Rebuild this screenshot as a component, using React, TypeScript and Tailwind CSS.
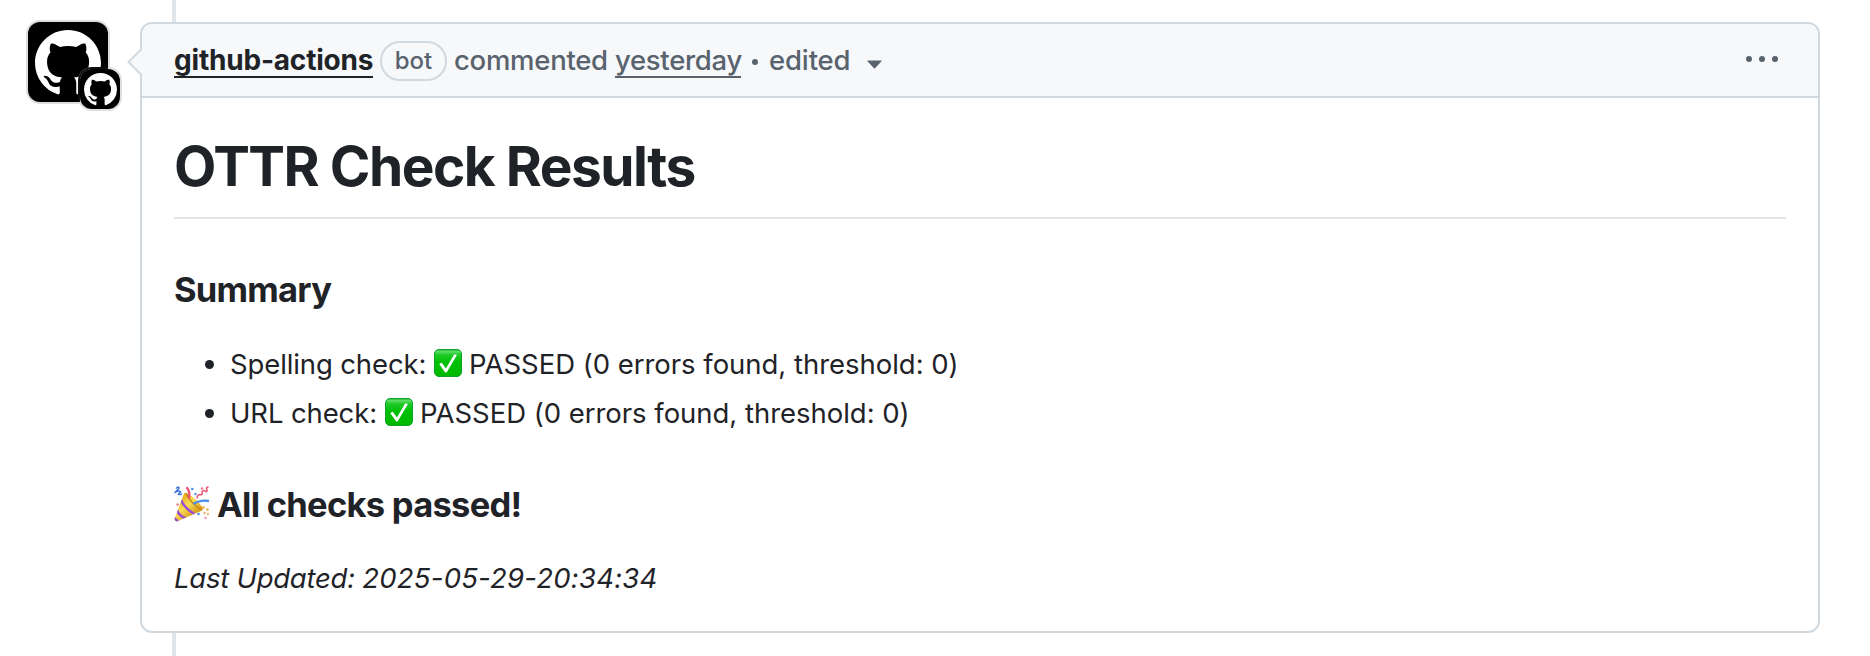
const MARK =
  'M8 0c4.42 0 8 3.58 8 8a8.013 8.013 0 0 1-5.45 7.59c-.4.08-.55-.17-.55-.38 0-.27.01-1.13.01-2.2 0-.75-.25-1.23-.54-1.48 1.78-.2 3.65-.88 3.65-3.95 0-.88-.31-1.59-.82-2.15.08-.2.36-1.02-.08-2.12 0 0-.67-.22-2.2.82-.64-.18-1.32-.27-2-.27-.68 0-1.36.09-2 .27-1.53-1.03-2.2-.82-2.2-.82-.44 1.1-.16 1.92-.08 2.12-.51.56-.82 1.28-.82 2.15 0 3.06 1.86 3.75 3.64 3.95-.23.2-.44.55-.51 1.07-.46.21-1.61.55-2.33-.66-.15-.24-.6-.83-1.23-.82-.67.01-.27.38.01.53.34.19.73.9.82 1.13.16.45.68 1.31 2.69.94 0 .67.01 1.3.01 1.49 0 .21-.15.45-.55.38A7.995 7.995 0 0 1 0 8c0-4.42 3.58-8 8-8Z';

function Mark({ className }: { className: string }) {
  return (
    <svg viewBox="0 0 16 16" className={className} fill="#fff" aria-hidden="true">
      <path d={MARK} />
    </svg>
  );
}

function Avatar() {
  return (
    <div className="relative mt-[22px] size-20 shrink-0 rounded-xl bg-black pt-2 pl-[7px] ring-2 ring-[#dedede]">
      <Mark className="size-[66px]" />
      <div className="absolute top-[47px] left-[52px] flex size-10 items-center justify-center rounded-xl bg-black shadow-[0_0_0_2px_#dedede]">
        <Mark className="size-[33px]" />
      </div>
      <div className="absolute top-[45px] left-[50px] h-[35px] w-[30px] rounded-tl-[14px] border-t-2 border-l-2 border-[#0c0c0c]" />
    </div>
  );
}

function CheckEmoji() {
  return (
    <svg viewBox="0 0 28 28" className="mt-[6px] size-7 shrink-0" aria-hidden="true">
      <defs>
        <linearGradient id="green" x1="0" y1="0" x2="0" y2="1">
          <stop offset="0" stopColor="#12b32a" />
          <stop offset="0.07" stopColor="#5fdc68" />
          <stop offset="0.2" stopColor="#1fcb27" />
          <stop offset="0.45" stopColor="#00c008" />
          <stop offset="1" stopColor="#00b900" />
        </linearGradient>
      </defs>
      <rect x="0.5" y="0.5" width="27" height="27" rx="4.5" fill="url(#green)" stroke="#10a42b" strokeWidth="1" />
      <path d="M5.3 15.2 7.6 13.6 11.9 19.6 20.3 5.3 22.9 6.1 12.8 23.3 11.2 23.4Z" fill="#fff" />
    </svg>
  );
}

function PartyEmoji() {
  return (
    <svg viewBox="0 0 36 36" className="mt-1 h-[36px] w-[36px] shrink-0" fill="none" aria-hidden="true">
      <defs>
        <linearGradient id="cone" x1="5" y1="14" x2="19" y2="30" gradientUnits="userSpaceOnUse">
          <stop offset="0" stopColor="#e9ae25" />
          <stop offset="0.45" stopColor="#fbdc55" />
          <stop offset="1" stopColor="#d99a1b" />
        </linearGradient>
        <clipPath id="coneClip">
          <path d="M10 7.5Q11 6 13.5 7.5 23 13 28.5 21.5 29.5 24 27 25L3.5 35.3Q.6 36 .4 33Z" />
        </clipPath>
      </defs>
      <g clipPath="url(#coneClip)">
        <path d="M0 0h36v36H0z" fill="url(#cone)" />
        <path d="M7 14Q10 22 20.5 28M3 24Q5 30 12 32.5M-1 31Q2 33 5 37" stroke="#9a4fd0" strokeWidth="2.5" />
        <path d="M12 7Q16 17 28 24" stroke="#c88a14" strokeWidth="1.6" />
      </g>
      <path d="M14.5 12.5Q17 6 12.5 1.2" stroke="#ec5473" strokeWidth="2.4" />
      <path d="M19.5 18Q26 13.5 35 15" stroke="#4c8de8" strokeWidth="2.4" />
      <path d="M2 2.5Q5-.5 5 2.5 2.5 4.5 1.5 6Q6 4 6.5 6 3 9 6 8.5L8 8" stroke="#3f74d8" strokeWidth="1.6" />
      <path d="M23.5 12.5Q22.5 9 26 8.5 29 9.5 28 6 29.5 3.5 31 5 33 7 33 4 31.5 1 34.5 1" stroke="#e85678" strokeWidth="1.6" />
      <circle cx="18.3" cy="3" r="1.3" fill="#4c8de8" />
      <circle cx="21.5" cy="8" r="1.2" fill="#4c8de8" />
      <circle cx="28" cy="2.5" r="1.2" fill="#ef718c" />
      <circle cx="3.5" cy="18.5" r="1.2" fill="#ef718c" />
      <circle cx="29.5" cy="21.5" r="1.2" fill="#f3a53e" />
      <circle cx="33.5" cy="23.5" r="1.3" fill="#eda548" />
      <circle cx="34" cy="28" r="1.1" fill="#f3a53e" />
      <circle cx="24.5" cy="28" r="1.3" fill="#4c8de8" />
      <circle cx="30.5" cy="27" r="1.2" fill="#f0a96c" />
      <circle cx="31.5" cy="32" r="1.3" fill="#f29bb9" />
    </svg>
  );
}

function Bullet() {
  return <span className="mt-[17px] mr-4 size-[9px] shrink-0 rounded-full bg-[#1f2328]" />;
}

export default function App() {
  return (
    <div className="flex h-[656px] w-[1870px] overflow-hidden bg-white pl-7 font-['Inter','Liberation_Sans',sans-serif] text-[27.5px] leading-[42px] text-[#1f2328]">
      <Avatar />
      <div className="ml-8 flex w-[1680px] flex-col">
        <div className="ml-8 h-[22px] w-1 shrink-0 bg-[#dfe4e9]" />
        <article className="relative h-[611px] shrink-0 rounded-xl border-2 border-[#d1d9e0] bg-white">
          <header className="flex h-[74px] items-center rounded-t-[10px] border-b-2 border-[#d1d9e0] bg-[#f6f8fa] pr-[39px] pl-8 text-[#59636e]">
            <a className="mt-[2px] h-[34px] w-[199px] shrink-0 border-b-2 border-[#1f2328] text-[28px] leading-[32px] font-[650] tracking-[-0.2px] whitespace-nowrap text-[#1f2328]">
              github-actions
            </a>
            <span className="mt-[2px] ml-[7px] flex h-10 w-[67px] shrink-0 items-center justify-center rounded-full border-2 border-[#d1d9e0] text-[24px] font-medium">
              bot
            </span>
            <span className="mt-[2px] ml-[7px] h-[34px] w-[161px] shrink-0 leading-[33px] font-[450] tracking-[-0.27px] whitespace-nowrap">
              commented
            </span>
            <a className="mt-[2px] h-[34px] w-[126px] shrink-0 border-b-2 border-[#59636e] leading-[33px] font-[450] tracking-[-0.3px] whitespace-nowrap">
              yesterday
            </a>
            <span className="mt-[3px] ml-[11px] size-[6px] shrink-0 rounded-full bg-[#59636e]" />
            <span className="mt-[2px] ml-[11px] h-[34px] w-[98px] shrink-0 leading-[33px] font-[450] tracking-[-0.15px]">
              edited
            </span>
            <svg viewBox="0 0 15 9" className="mt-[8px] h-[9px] w-[15px] shrink-0" fill="#59636e" aria-hidden="true">
              <path d="M1 .5h13q.8.1.3.9L8 8.3q-.5.5-1 0L.7 1.4Q.2.6 1 .5Z" />
            </svg>
            <svg viewBox="0 0 34 6" className="mb-[2px] ml-auto h-[6px] w-[34px] shrink-0" fill="#59636e" aria-hidden="true">
              <circle cx="4" cy="3" r="3" />
              <circle cx="17" cy="3" r="3" />
              <circle cx="30" cy="3" r="3" />
            </svg>
          </header>
          <svg viewBox="0 0 16 30" className="absolute top-[23px] -left-[16px] h-[30px] w-4" fill="none" aria-hidden="true">
            <path d="M16 1.5 2.5 15 16 28.5Z" fill="#f6f8fa" />
            <path d="M15.5 2 2.5 15 15.5 28" stroke="#d1d9e0" strokeWidth="2" />
          </svg>
          <div className="px-8 pt-8">
            <h1 className="mb-12 h-[89px] border-b-2 border-[#dfe4e9] text-[55px] leading-[72px] font-[650] tracking-[-1.5px]">
              OTTR Check Results
            </h1>
            <h3 className="mb-8 h-[44px] text-[34.5px] leading-[46px] font-[650] tracking-[-0.75px]">Summary</h3>
            <ul className="flex flex-col gap-[7px] pl-[31px]">
              <li className="flex whitespace-nowrap">
                <Bullet />
                <span className="w-[204px] tracking-[-0.12px]">Spelling check:</span>
                <CheckEmoji />
                <span className="ml-[7px] tracking-[-0.03px]">PASSED (0 errors found, threshold: 0)</span>
              </li>
              <li className="flex whitespace-nowrap">
                <Bullet />
                <span className="w-[155px] tracking-[-0.12px]">URL check:</span>
                <CheckEmoji />
                <span className="ml-[7px] tracking-[-0.03px]">PASSED (0 errors found, threshold: 0)</span>
              </li>
            </ul>
            <h3 className="mt-12 mb-8 flex h-[44px] gap-[7px] text-[34.5px] leading-[46px] font-[650] tracking-[-0.72px]">
              <PartyEmoji />
              All checks passed!
            </h3>
            <p className="leading-[40px] italic">
              <span className="tracking-[-0.25px]">Last Updated: </span>
              <span className="tracking-[0.22px]">2025-05-29-20:34:34</span>
            </p>
          </div>
        </article>
        <div className="ml-8 h-[23px] w-1 shrink-0 bg-[#dfe4e9]" />
      </div>
    </div>
  );
}
